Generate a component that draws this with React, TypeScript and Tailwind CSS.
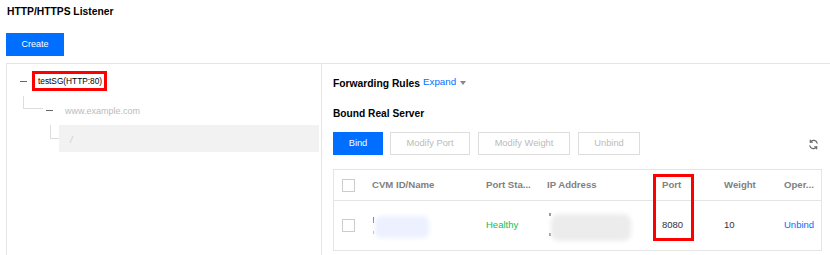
import React from "react";

const F = { fontFamily: '"Liberation Sans", Arial, sans-serif' };

function Refresh() {
  return (
    <svg width="11" height="11" viewBox="0 0 24 24" fill="none" stroke="#666" strokeWidth="2.6" strokeLinecap="round" strokeLinejoin="round">
      <path d="M20 9a8 8 0 0 0-14.5-2.5" />
      <path d="M4 15a8 8 0 0 0 14.5 2.5" />
      <path d="M5 2.5v4.5h4.5" />
      <path d="M19 21.5V17h-4.5" />
    </svg>
  );
}

export default function App() {
  return (
    <div className="w-[830px] h-[255px] overflow-hidden bg-white text-[9.5px] text-[#333]" style={F}>
      <div className="pl-[7px] pt-[5px] h-[19px] leading-[14px] font-bold text-[10.3px] text-[#000]">HTTP/HTTPS Listener</div>
      <div className="pl-[6px] mt-[14px]">
        <button className="w-[58px] h-[23px] bg-[#006eff] text-white text-[9px] leading-[23px]">Create</button>
      </div>
      <div className="ml-[6px] mt-[7px] border-t border-l border-[#e5e5e5] flex h-[200px]">
        {/* left tree */}
        <div className="w-[315px] border-r border-[#e5e5e5] shrink-0">
          <div className="flex items-center h-[20px] mt-[7px]">
            <div className="w-[7px] h-[1px] bg-[#666] ml-[13px]" />
            <div className="ml-[5px] border-[3px] border-[#ff0000] h-[20px] pl-[3px] pr-[2px] flex items-center text-[8.3px] text-[#000] leading-none">testSG(HTTP:80)</div>
          </div>
          <div className="flex items-start h-[34px]">
            <div className="ml-[16px] mt-[5px] w-[20px] h-[13px] border-l border-b border-[#ddd]" />
            <div className="w-[7px] h-[1px] bg-[#666] ml-[3px] mt-[19px]" />
            <div className="ml-[12px] mt-[13px] text-[9px] text-[#bbb] leading-[14px]">www.example.com</div>
          </div>
          <div className="flex items-start h-[28px]">
            <div className="ml-[43px] w-[21px] h-[14px] border-l border-b border-[#ddd]" />
            <div className="ml-[-12px] flex-1 bg-[#f2f2f2] h-[27px] mr-[2px] rounded-[1px] text-[#ccc] text-[9px] pl-[11px] pt-[9px] italic leading-[12px]">/</div>
          </div>
        </div>
        {/* right */}
        <div className="flex-1 pl-[11px] pr-[8px]">
          <div className="mt-[13px] h-[14px] flex items-center">
            <span className="font-bold text-[10.3px] text-[#000] leading-[14px]">Forwarding Rules</span>
            <span className="ml-[3px] text-[#006eff] text-[9.8px] leading-[14px] relative top-[-2px]">Expand</span>
            <svg width="6" height="4" viewBox="0 0 6 4" className="ml-[4px] relative top-[-1px]"><path d="M0 0h6L3 4z" fill="#888" /></svg>
          </div>
          <div className="mt-[16px] h-[14px] leading-[14px] font-bold text-[10.2px] text-[#000]">Bound Real Server</div>
          <div className="mt-[11px] flex items-center h-[23px] text-[9.3px]">
            <button className="w-[50px] h-[23px] bg-[#006eff] text-white">Bind</button>
            <button className="ml-[7px] w-[80px] h-[23px] border border-[#ddd] text-[#bbb]">Modify Port</button>
            <button className="ml-[8px] w-[92px] h-[23px] border border-[#ddd] text-[#bbb]">Modify Weight</button>
            <button className="ml-[8px] w-[62px] h-[23px] border border-[#ddd] text-[#bbb]">Unbind</button>
            <div className="ml-auto mr-[3px] mt-[1px] flex"><Refresh /></div>
          </div>
          <div className="mt-[14px] border border-[#e5e5e5] border-b-0 relative">
            <div className="flex items-center h-[31px] border-b border-[#e5e5e5] text-[9.6px] font-bold text-[#7f7f7f]">
              <div className="w-[38px] pl-[8px]"><div className="w-[13px] h-[13px] border border-[#ccc] bg-white" /></div>
              <div className="w-[114px]">CVM ID/Name</div>
              <div className="w-[61px] whitespace-nowrap">Port Sta...</div>
              <div className="w-[115px]">IP Address</div>
              <div className="w-[62px]">Port</div>
              <div className="w-[60px]">Weight</div>
              <div>Oper...</div>
            </div>
            <div className="flex items-center h-[50px] border-b border-[#e5e5e5] text-[9.5px]">
              <div className="w-[38px] pl-[8px]"><div className="w-[13px] h-[13px] border border-[#ccc] bg-white" /></div>
              <div className="w-[114px] relative h-[50px]">
                <div className="absolute left-[1px] top-[16px] w-[1px] h-[6px] bg-[#4a7cff]" />
                <div className="absolute left-[1px] top-[30px] w-[1px] h-[3px] bg-[#bbb]" />
                <div className="absolute left-[3px] top-[15px] w-[54px] h-[22px] bg-[#edf1ff] rounded-[6px] blur-[2px]" />
              </div>
              <div className="w-[61px] text-[#0abf5b]">Healthy</div>
              <div className="w-[115px] relative h-[50px]">
                <div className="absolute left-[2px] top-[12px] w-[2px] h-[3px] bg-[#999]" />
                <div className="absolute left-[2px] top-[32px] w-[2px] h-[3px] bg-[#999]" />
                <div className="absolute left-[4px] top-[13px] w-[80px] h-[27px] bg-[#ececec] rounded-[8px] blur-[2px]" />
              </div>
              <div className="w-[62px]">8080</div>
              <div className="w-[60px]">10</div>
              <div className="text-[#006eff]">Unbind</div>
            </div>
            <div className="absolute left-[319px] top-[4px] w-[41px] h-[67px] border-[3px] border-[#ff0000]" />
          </div>
        </div>
      </div>
    </div>
  );
}
